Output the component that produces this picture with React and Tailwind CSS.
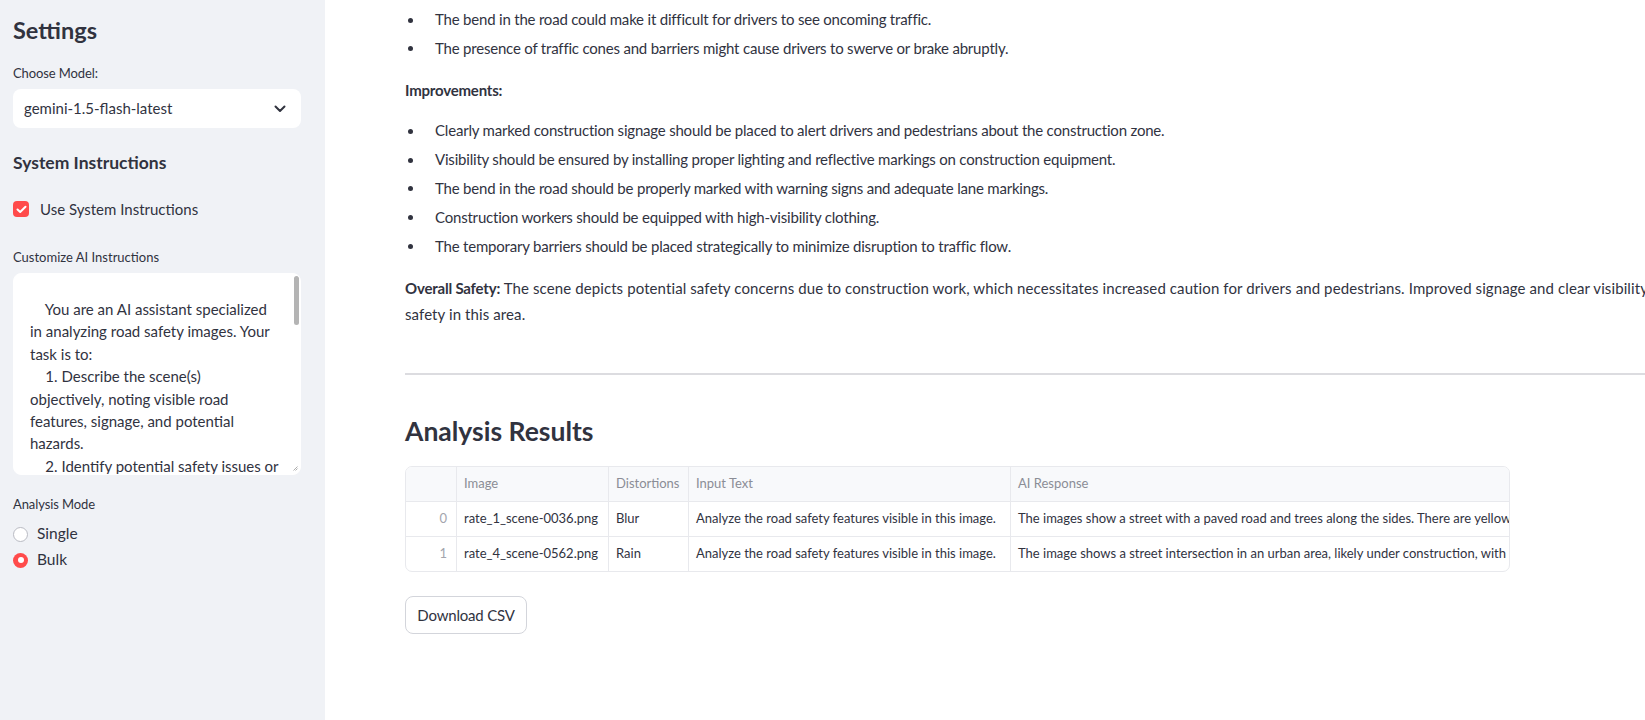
import React from "react";

const topBullets = [
  "Pedestrians may be at risk due to the lack of a designated walkway (especially at night).",
  "The bend in the road could make it difficult for drivers to see oncoming traffic.",
  "The presence of traffic cones and barriers might cause drivers to swerve or brake abruptly.",
];

const improvements = [
  "Clearly marked construction signage should be placed to alert drivers and pedestrians about the construction zone.",
  "Visibility should be ensured by installing proper lighting and reflective markings on construction equipment.",
  "The bend in the road should be properly marked with warning signs and adequate lane markings.",
  "Construction workers should be equipped with high-visibility clothing.",
  "The temporary barriers should be placed strategically to minimize disruption to traffic flow.",
];

const instructionLines = [
  " ",
  "    You are an AI assistant specialized",
  "in analyzing road safety images. Your",
  "task is to:",
  "    1. Describe the scene(s)",
  "objectively, noting visible road",
  "features, signage, and potential",
  "hazards.",
  "    2. Identify potential safety issues or",
  "hazards in the scene.",
];

const rows = [
  {
    idx: "0",
    image: "rate_1_scene-0036.png",
    dist: "Blur",
    input: "Analyze the road safety features visible in this image.",
    ai: "The images show a street with a paved road and trees along the sides. There are yellow and black barriers placed along the road edge.",
  },
  {
    idx: "1",
    image: "rate_4_scene-0562.png",
    dist: "Rain",
    input: "Analyze the road safety features visible in this image.",
    ai: "The image shows a street intersection in an urban area, likely under construction, with traffic cones and temporary barriers.",
  },
];

function Bullet({ children }) {
  return (
    <li className="flex items-center">
      <span className="flex w-[30px] shrink-0 items-center">
        <span className="ml-[2.5px] mt-[1px] block h-[5px] w-[5px] rounded-full bg-[#31333f]" />
      </span>
      <span>{children}</span>
    </li>
  );
}

export default function App() {
  return (
    <div className="flex h-[720px] w-[1645px] overflow-hidden bg-white text-[#31333f] [font-family:Lato,sans-serif]">
      {/* Sidebar */}
      <aside className="flex w-[325px] shrink-0 flex-col bg-[#f0f2f6] pl-[13px] pr-[24px] pt-[16px]">
        <h2 className="text-[23.5px] font-bold leading-[29px]">Settings</h2>

        <div className="mt-[18px] text-[13px] leading-[20px] tracking-[-0.1px]">Choose Model:</div>
        <div className="mt-[6px] flex h-[39px] items-center justify-between rounded-lg bg-white pl-[11px] pr-[15px]">
          <span className="text-[15px]">gemini-1.5-flash-latest</span>
          <svg width="12" height="8" viewBox="0 0 12 8" aria-hidden="true">
            <path d="M1.5 1.5 L6 6 L10.5 1.5" fill="none" stroke="#31333f" strokeWidth="2" strokeLinecap="round" strokeLinejoin="round" />
          </svg>
        </div>

        <h3 className="mt-[23px] text-[17.5px] font-bold leading-[24px]">System Instructions</h3>

        <div className="mt-[22px] flex h-[24px] items-center gap-[11px]">
          <span className="flex h-[16px] w-[16px] items-center justify-center rounded-[4px] bg-[#ff4b4b]">
            <svg width="11" height="9" viewBox="0 0 11 9" aria-hidden="true">
              <path d="M1.5 4.5 L4.2 7 L9.5 1.8" fill="none" stroke="white" strokeWidth="2" strokeLinecap="round" strokeLinejoin="round" />
            </svg>
          </span>
          <span className="text-[15px]">Use System Instructions</span>
        </div>

        <div className="mt-[26px] text-[13px] leading-[20px]">Customize AI Instructions</div>
        <div className="relative mt-[6px] h-[202px] overflow-hidden rounded-lg border border-white bg-white px-[16px] pt-[1.5px]">
          {instructionLines.map((l, i) => (
            <div key={i} className="whitespace-pre text-[15px] leading-[22.4px]">
              {l}
            </div>
          ))}
          <div className="absolute right-[1px] top-[2px] h-[49px] w-[5px] rounded-full bg-[#b4b4b4]" />
          <svg className="absolute bottom-[3px] right-[2px]" width="5" height="5" viewBox="0 0 5 5" aria-hidden="true">
            <path d="M0.5 4.5 L4.5 0.5 M2.5 4.5 L4.5 2.5" stroke="#9a9a9a" strokeWidth="0.8" />
          </svg>
        </div>

        <div className="mt-[19px] text-[13px] leading-[20px] tracking-[-0.1px]">Analysis Mode</div>
        <div className="mt-[8px] flex h-[24px] items-center gap-[9px]">
          <span className="block h-[15px] w-[15px] rounded-full border border-[#b9bbc3] bg-white" />
          <span className="text-[15.5px]">Single</span>
        </div>
        <div className="mt-[2px] flex h-[24px] items-center gap-[9px]">
          <span className="flex h-[15px] w-[15px] items-center justify-center rounded-full bg-[#ff4b4b]">
            <span className="block h-[6px] w-[6px] rounded-full bg-white" />
          </span>
          <span className="text-[15.5px]">Bulk</span>
        </div>
      </aside>

      {/* Main */}
      <main className="min-w-0 flex-1 overflow-hidden">
        <div className="w-[1420px] whitespace-nowrap pl-[80px] text-[15px] tracking-[-0.2px]">
          <ul className="-mt-[23.5px] leading-[28.8px]">
            {topBullets.map((t, i) => (
              <Bullet key={i}>{t}</Bullet>
            ))}
          </ul>

          <p className="mt-[15px] font-bold leading-[25.6px]">Improvements:</p>

          <ul className="mt-[13px] leading-[28.8px]">
            {improvements.map((t, i) => (
              <Bullet key={i}>{t}</Bullet>
            ))}
          </ul>

          <p className="mt-[14.5px] leading-[26px]">
            <b className="font-bold">Overall Safety:</b>{" "}
            <span className="tracking-[0.1px]">
              The scene depicts potential safety concerns due to construction work, which necessitates increased caution for drivers and pedestrians. Improved signage and clear visibility measures are essential to ensure
            </span>
            <br />
            <span className="tracking-[0.1px]">safety in this area.</span>
          </p>

          <div className="mt-[46px] h-[2px] bg-[#dcdce0]" />

          <h2 className="mt-[40.5px] text-[26.5px] font-bold leading-[33.6px] tracking-normal">Analysis Results</h2>

          <div className="mt-[16.5px] w-[1105px] overflow-hidden rounded-[7px] border border-[#e8e9ed] text-[13px] tracking-normal">
            <div className="flex h-[35px] border-b border-[#e8e9ed] bg-[#f8f9fb] text-[#8b8d96]">
              <div className="w-[51px] border-r border-[#e8e9ed]" />
              <div className="flex w-[152px] items-center border-r border-[#e8e9ed] pl-[7px]">Image</div>
              <div className="flex w-[80px] items-center border-r border-[#e8e9ed] pl-[7px]">Distortions</div>
              <div className="flex w-[322px] items-center border-r border-[#e8e9ed] pl-[7px]">Input Text</div>
              <div className="flex w-[498px] items-center pl-[7px]">AI Response</div>
            </div>
            {rows.map((r, i) => (
              <div key={r.idx} className={i === 0 ? "flex h-[35px] border-b border-[#e8e9ed]" : "flex h-[34px]"}>
                <div className="flex w-[51px] items-center justify-end border-r border-[#e8e9ed] pr-[9px] text-[#a3a5ad]">{r.idx}</div>
                <div className="flex w-[152px] items-center overflow-hidden border-r border-[#e8e9ed] pl-[7px]">{r.image}</div>
                <div className="flex w-[80px] items-center overflow-hidden border-r border-[#e8e9ed] pl-[7px]">{r.dist}</div>
                <div className="flex w-[322px] items-center overflow-hidden border-r border-[#e8e9ed] pl-[7px]">{r.input}</div>
                <div className="flex w-[498px] items-center overflow-hidden pl-[7px]">{r.ai}</div>
              </div>
            ))}
          </div>

          <button className="mt-[24px] flex h-[38.5px] w-[122px] items-center justify-center rounded-lg border border-[#d3d5db] bg-white text-[15px] tracking-[-0.2px] text-[#31333f]">
            Download CSV
          </button>
        </div>
      </main>
    </div>
  );
}
